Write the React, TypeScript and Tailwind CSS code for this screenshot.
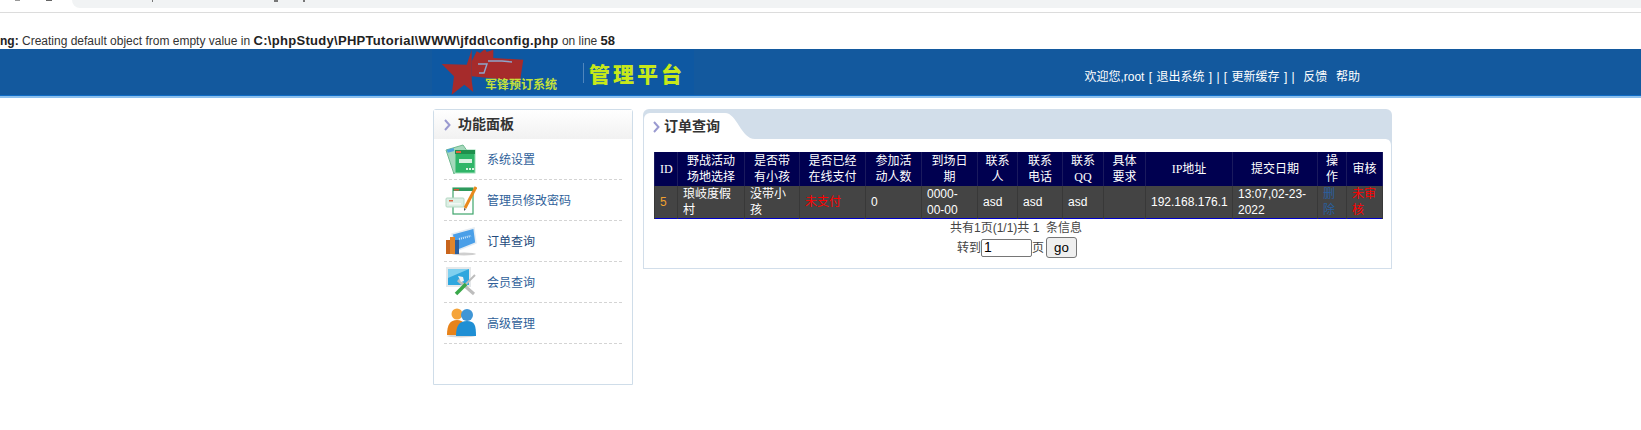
import React from 'react';

const font = "[font-family:'Liberation_Sans','Noto_Sans_CJK_SC',sans-serif]";

const headers = [
  ['ID', 'w-[23px]'],
  ['野战活动场地选择', 'w-[67px]'],
  ['是否带有小孩', 'w-[55px]'],
  ['是否已经在线支付', 'w-[66px]'],
  ['参加活动人数', 'w-[56px]'],
  ['到场日期', 'w-[56px]'],
  ['联系人', 'w-[40px]'],
  ['联系电话', 'w-[45px]'],
  ['联系QQ', 'w-[41px]'],
  ['具体要求', 'w-[42px]'],
  ['IP地址', 'w-[87px]'],
  ['提交日期', 'w-[85px]'],
  ['操作', 'w-[29px]'],
  ['审核', 'w-[36px]'],
];

function Chevron() {
  return (
    <svg width="7" height="12" viewBox="0 0 7 12" className="shrink-0">
      <path d="M1 1l4.5 5L1 11" fill="none" stroke="#9a9ad0" strokeWidth="2" />
    </svg>
  );
}

function Logo() {
  return (
    <div className="flex h-full w-[262px] bg-[#0e58a2]">
      <div className="relative w-[142px] ml-[9px] shrink-0">
        <svg width="90" height="48" viewBox="0 0 90 48">
          <path d="M30.7 .7L25.7 15.7 .7 15 13 27.3 10.7 45.7 23.3 35.7 32.3 43 30.7 32 30.7 19z" fill="#a62b2b" />
          <path d="M30.7 12.3L35.7 2.3 39 4 44 0l1.7 3 6.6-2.3V9l30 1.7L79 32.3 30.7 27.3z" fill="#a62b2b" />
          <path d="M37 15h9l-3 9h-5M47 12h14l10 1" fill="none" stroke="#8fa6cc" strokeWidth="1.4" />
        </svg>
        <span className="absolute left-[44px] top-[30px] text-[12px] leading-[12px] font-bold text-[#c4e03a] whitespace-nowrap">军锋预订系统</span>
      </div>
      <div className="w-px h-[20px] mt-[14px] bg-[#4f86bd] shrink-0" />
      <div className="ml-[5px] mt-[14px] text-[21px] leading-[24px] font-black text-[#c7e81a] tracking-[3px] whitespace-nowrap">管理平台</div>
    </div>
  );
}

function SettingsIcon() {
  return (
    <svg width="32" height="32" viewBox="0 0 32 32">
      <path d="M1 7l17-5 5 7-14 22z" fill="#a6d8bc" stroke="#6fb98f" />
      <rect x="2" y="6" width="7" height="3" fill="#4aa3dd" transform="rotate(-15 5 7)" />
      <rect x="10" y="7" width="20" height="23" fill="#2fb568" stroke="#9bdcb5" />
      <rect x="10" y="7" width="20" height="4" fill="#1f8f4d" />
      <rect x="11" y="8" width="5" height="2" fill="#e0633f" />
      <rect x="14" y="16" width="13" height="4" fill="#d9f1e2" />
      <rect x="21" y="25" width="2" height="2" fill="#d9f1e2" />
      <rect x="24" y="25" width="2" height="2" fill="#d9f1e2" />
      <rect x="27" y="25" width="2" height="2" fill="#d9f1e2" />
    </svg>
  );
}

function PasswordIcon() {
  return (
    <svg width="32" height="32" viewBox="0 0 32 32">
      <rect x="8" y="4" width="20" height="26" fill="#ffffff" stroke="#3fa56c" strokeWidth="1.2" />
      <rect x="8" y="4" width="20" height="3" fill="#2f9a5d" />
      <rect x="9" y="5" width="5" height="1.5" fill="#d9573a" />
      <rect x="1" y="14" width="18" height="9" rx="1" fill="#dcefe4" stroke="#b4d8c3" />
      <rect x="4" y="16" width="4" height="1.5" fill="#e0633f" />
      <rect x="4" y="19" width="12" height="1.5" fill="#f3f8f5" />
      <path d="M20 24L31 3" stroke="#e98a1d" strokeWidth="3" />
      <path d="M19 27l0-3 2 1z" fill="#555" />
    </svg>
  );
}

function OrderIcon() {
  return (
    <svg width="32" height="32" viewBox="0 0 32 32">
      <ellipse cx="19" cy="29" rx="12" ry="1.5" fill="#cfcfcf" />
      <path d="M7 9l22-6 2 15-20 8z" fill="#4a9fe8" stroke="#e4ecf3" strokeWidth="1.5" />
      <path d="M14 14l12-3" stroke="#cfe8fb" strokeWidth="2" strokeDasharray="1 1" />
      <rect x="1" y="15" width="4" height="14" fill="#c8641c" />
      <rect x="5" y="12" width="5" height="17" fill="#e2852a" />
      <rect x="10" y="15" width="4" height="14" fill="#2b5f9e" />
    </svg>
  );
}

function MemberIcon() {
  return (
    <svg width="32" height="32" viewBox="0 0 32 32">
      <rect x="1" y="1" width="25" height="20" fill="#e5e8ea" />
      <rect x="3" y="3" width="21" height="16" fill="#2fa7de" />
      <path d="M3 3h21L3 12z" fill="#7fd0ef" />
      <path d="M13 14l16 14" stroke="#bdbdbd" strokeWidth="3" />
      <path d="M30 9L20 19" stroke="#bdbdbd" strokeWidth="2" />
      <path d="M21 18L11 28" stroke="#3aa84a" strokeWidth="3.5" />
      <path d="M13 10l5 1 1 4-3 1z" fill="#f2f2f2" />
    </svg>
  );
}

function AdminIcon() {
  return (
    <svg width="32" height="32" viewBox="0 0 32 32">
      <ellipse cx="16" cy="29" rx="14" ry="1.5" fill="#d8d8d8" />
      <circle cx="12" cy="7" r="5.5" fill="#f5a43a" />
      <path d="M2 28c0-10 3-15 10-15s9 5 9 15z" fill="#e8831a" />
      <circle cx="22" cy="8" r="6" fill="#3f96d6" />
      <path d="M11 29c0-10 3-15 11-15s9 5 9 15z" fill="#1f8fd4" />
    </svg>
  );
}

const menu = [
  { label: '系统设置', icon: <SettingsIcon />, cls: 'text-[#2f5f9a]' },
  { label: '管理员修改密码', icon: <PasswordIcon />, cls: 'text-[#2f5f9a]' },
  { label: '订单查询', icon: <OrderIcon />, cls: 'text-[#234a7c]' },
  { label: '会员查询', icon: <MemberIcon />, cls: 'text-[#2f5f9a]' },
  { label: '高级管理', icon: <AdminIcon />, cls: 'text-[#2f5f9a]' },
];

const td = 'border-x border-[#383838] pl-[5px] pr-[2px] py-0';

export default function App() {
  return (
    <div className={`${font} w-[1641px] h-[430px] overflow-hidden bg-white text-[12px] text-[#333]`}>
      {/* browser chrome leftovers */}
      <div className="relative h-[13px] border-b border-[#dcdcdc] pl-[72px]">
        <div className="h-[8px] bg-[#f1f3f4] rounded-bl-[10px]" />
        <i className="absolute left-[15px] top-0 w-[5px] h-px bg-[#999]" />
        <i className="absolute left-[46px] top-0 w-[6px] h-px bg-[#666]" />
        <i className="absolute left-[152px] top-0 w-px h-[2px] bg-[#777]" />
        <i className="absolute left-[274px] top-0 w-[4px] h-[2px] bg-[#777]" />
        <i className="absolute left-[303px] top-0 w-[2px] h-[2px] bg-[#777]" />
      </div>

      {/* php warning */}
      <div className="h-[36px] pt-[21px] leading-[14px] whitespace-nowrap text-[12px] text-[#333]">
        <b className="text-[#222]">ng:</b> Creating default object from empty value in <b className="text-[13px] tracking-[0.3px] text-[#222]">C:\phpStudy\PHPTutorial\WWW\jfdd\config.php</b> on line <b className="text-[13px] text-[#222]">58</b>
      </div>

      {/* header */}
      <div className="h-[49px] bg-[#13599e] border-b-[2px] border-b-[#8cc0ee] shadow-[inset_0_-1px_0_#0f6cc6]">
        <div className="ml-[432px] w-[928px] h-[46px] flex justify-between overflow-hidden">
          <Logo />
          <div className="pt-[19px] text-white whitespace-nowrap [word-spacing:1px]">欢迎您,root [ 退出系统 ] | [ 更新缓存 ] |&nbsp; 反馈&nbsp;&nbsp;帮助</div>
        </div>
      </div>

      {/* body */}
      <div className="ml-[433px] w-[959px] mt-[11px] flex gap-[10px]">
        {/* sidebar */}
        <div className="w-[200px] h-[276px] border border-[#cfdde9] rounded-t-[3px]">
          <div className="h-[29px] flex items-center gap-[7px] pl-[10px] bg-gradient-to-b from-white to-[#f1f1f1]">
            <Chevron />
            <span className="text-[14px] font-bold text-[#333]">功能面板</span>
          </div>
          <div className="px-[10px]">
            {menu.map((m) => (
              <div key={m.label} className="h-[41px] flex items-center border-b border-dashed border-[#d4d4d4]">
                <div className="w-[32px] ml-[1px] mr-[10px] flex">{m.icon}</div>
                <span className={`${m.cls} pt-[2px]`}>{m.label}</span>
              </div>
            ))}
          </div>
        </div>

        {/* main panel */}
        <div className="w-[749px] h-[160px] bg-[#d2deea] rounded-t-[6px]">
          <div className="h-[30px] pt-[4px] pl-[1px] flex">
            <div className="w-[81px] bg-white rounded-tl-[6px] flex items-center gap-[4px] pl-[9px] pt-[1px]">
              <Chevron />
              <span className="text-[14px] font-bold text-[#333]">订单查询</span>
            </div>
            <svg width="30" height="26" viewBox="0 0 30 26" className="shrink-0">
              <path d="M0 0c12 0 16 26 30 26H0z" fill="#fff" />
            </svg>
          </div>
          <div className="h-[130px] bg-white border border-t-0 border-[#d2deea] rounded-tr-[6px] pt-[13px] px-[10px]">
            <table className="table-fixed w-[728px] border-collapse text-white text-[12px] leading-[16px] border-b border-b-[#0000c8]">
              <thead>
                <tr className="h-[34px] bg-[#000050]">
                  {headers.map(([h, w]) => (
                    <th key={h} className={`${w} border-x border-[#1a1a5e] px-[5px] py-0 font-normal text-center [font-family:'Liberation_Serif','Noto_Sans_CJK_SC',serif]`}>
                      {h}
                    </th>
                  ))}
                </tr>
              </thead>
              <tbody>
                <tr className="h-[32px] bg-[#444444]">
                  <td className={`${td} text-[#f0a030]`}>5</td>
                  <td className={td}>琅岐度假村</td>
                  <td className={td}>没带小孩</td>
                  <td className={`${td} text-[#ff0000]`}>未支付</td>
                  <td className={td}>0</td>
                  <td className={td}>0000-00-00</td>
                  <td className={td}>asd</td>
                  <td className={td}>asd</td>
                  <td className={td}>asd</td>
                  <td className={td}></td>
                  <td className={`${td} whitespace-nowrap`}>192.168.176.1</td>
                  <td className={td}>13:07,02-23-2022</td>
                  <td className={`${td} text-[#2a5f9e]`}>删除</td>
                  <td className={`${td} !pr-0 text-[#ff0000]`}>未审核</td>
                </tr>
              </tbody>
            </table>
            <div className="w-[724px] text-center leading-[18px] text-[#444]">共有1页(1/1)共 1&nbsp; 条信息</div>
            <div className="w-[726px] flex justify-center items-center text-[#444]">
              <span>转到</span>
              <input
                defaultValue="1"
                className="w-[51px] h-[18px] border border-[#767676] rounded-[2px] px-[2px] text-[14px] text-black outline-none"
              />
              <span>页</span>
              <button className="ml-[2px] w-[31px] h-[21px] border border-[#767676] rounded-[3px] bg-[#efefef] text-[13.3px] text-black">go</button>
            </div>
          </div>
        </div>
      </div>
    </div>
  );
}
